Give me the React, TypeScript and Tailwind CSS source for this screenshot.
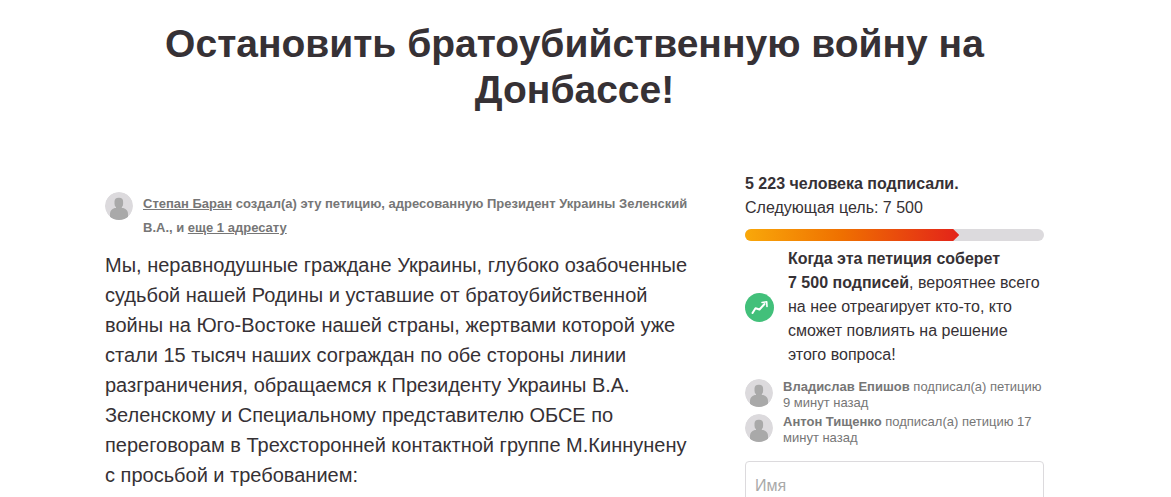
const signers = [
  { name: "Владислав Епишов", action: "подписал(а) петицию", time: "9 минут назад" },
  { name: "Антон Тищенко", action: "подписал(а) петицию", time: "17 минут назад" },
];

const signed = 5223;
const goal = 7500;

function formatCount(value: number) {
  return value.toString().replace(/\B(?=(\d{3})+$)/g, "\u00a0");
}

function Avatar() {
  return (
    <svg viewBox="0 0 28 28" className="w-7 h-7 shrink-0 rounded-full" aria-hidden="true">
      <circle cx="14" cy="14" r="14" fill="#dcdadd" />
      <g fill="#a9a9a9">
        <rect x="9.500" y="5.800" width="8.600" height="10" rx="4" />
        <path d="M11 13h5.800v4H11z" />
        <path d="M5 28v-6c0-3.500 2.600-6 6-6h6c3.400 0 6 2.500 6 6v6z" />
      </g>
    </svg>
  );
}

function TrendBadge() {
  return (
    <svg viewBox="0 0 29 29" className="w-[29px] h-[29px] shrink-0" aria-hidden="true">
      <circle cx="14.500" cy="14.500" r="14.500" fill="#42c07a" />
      <path d="M7.500 20l3-4.800 4 1.300 5-5.500" fill="none" stroke="#fff" strokeWidth="2" strokeLinejoin="round" strokeLinecap="round" />
      <path d="M17 9.500l4.700-.7.300 4.700" fill="none" stroke="#fff" strokeWidth="1.600" strokeLinejoin="round" strokeLinecap="round" />
    </svg>
  );
}

function ProgressBar() {
  return (
    <div className="h-3 rounded-full bg-[#dcdadd] overflow-hidden">
      <svg
        viewBox="0 0 214 12"
        preserveAspectRatio="none"
        className="block h-3"
        style={{ width: `${(signed / goal) * 100 + 2}%` }}
        aria-hidden="true"
      >
        <defs>
          <linearGradient id="progress" x1="0" x2="1">
            <stop offset="0" stopColor="#f9a80a" />
            <stop offset="0.450" stopColor="#ef7000" />
            <stop offset="1" stopColor="#e3231a" />
          </linearGradient>
        </defs>
        <path d="M0 0h208l6 6-6 6H0z" fill="url(#progress)" />
      </svg>
    </div>
  );
}

function Sidebar() {
  return (
    <aside className="w-[299px] shrink-0 text-base leading-6">
      <p className="font-bold">{formatCount(signed)} человека подписали.</p>
      <p>Следующая цель: {formatCount(goal)}</p>
      <div className="mt-[9px]">
        <ProgressBar />
      </div>

      <div className="mt-1.5 flex items-center gap-3.5">
        <TrendBadge />
        <p>
          <strong>
            Когда эта петиция соберет {formatCount(goal)} подписей
          </strong>
          , вероятнее всего на нее отреагирует кто-то, кто сможет повлиять на решение этого вопроса!
        </p>
      </div>

      <ul className="mt-3 space-y-[3px] text-[13px] leading-4 text-[#767676]">
        {signers.map(({ name, action, time }) => (
          <li key={name} className="flex items-start gap-2.5">
            <Avatar />
            <p>
              <strong>{name}</strong> {action} {time}
            </p>
          </li>
        ))}
      </ul>

      <form className="mt-[15px]">
        <input
          type="text"
          name="firstName"
          aria-label="Имя"
          placeholder="Имя"
          className="block w-full h-[50px] px-[9px] rounded border border-[#dcdadd] placeholder:text-[#a9a9a9]"
        />
      </form>
    </aside>
  );
}

export default function App() {
  return (
    <div className="h-screen overflow-hidden bg-white pr-[22px] font-['Liberation_Sans',Arial,sans-serif] text-[#363135]">
      <div className="mx-auto max-w-[939px] pt-[21px]">
        <h1 className="mx-auto max-w-[860px] text-center text-[39px] leading-[46px] font-bold">
          Остановить братоубийственную войну на Донбассе!
        </h1>

        <div className="mt-[59px] flex gap-11">
          <main className="flex-1 pt-5">
            <div className="flex gap-2.5 text-[13px] leading-6 font-bold text-[#767676]">
              <Avatar />
              <p>
                <a href="#author" className="underline">Степан Баран</a> создал(а) эту петицию, адресованную
                Президент Украины Зеленский В.А., и <a href="#recipients" className="underline">еще 1 адресату</a>
              </p>
            </div>
            <p className="mt-2.5 text-xl leading-[30px]">
              Мы, неравнодушные граждане Украины, глубоко озабоченные судьбой нашей Родины и уставшие от
              братоубийственной войны на Юго-Востоке нашей страны, жертвами которой уже стали 15 тысяч наших
              сограждан по обе стороны линии разграничения, обращаемся к Президенту Украины В.А. Зеленскому и
              Специальному представителю ОБСЕ по переговорам в Трехсторонней контактной группе М.Киннунену с
              просьбой и требованием:
            </p>
          </main>
          <Sidebar />
        </div>
      </div>
    </div>
  );
}
